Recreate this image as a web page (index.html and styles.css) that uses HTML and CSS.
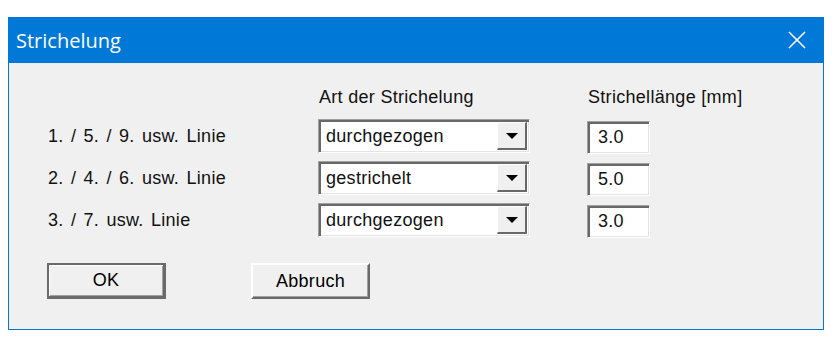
FILE: index.html
```html
<!DOCTYPE html>
<html lang="de">
<head>
  <meta charset="UTF-8" />
  <title>Strichelung</title>
  <link rel="stylesheet" href="styles.css">
</head>
<body>

  <div class="dialog">
    <div class="titlebar">
      <span class="title">Strichelung</span>
      <svg class="close" width="18" height="18" viewBox="0 0 18 18">
        <path d="M1 1 L17 17 M17 1 L1 17" stroke="#fff" stroke-width="1.6" fill="none" />
      </svg>
    </div>

    <div class="client">
      <div class="grid">
        <div></div>
        <div class="head">Art der Strichelung</div>
        <div class="head">Strichellänge [mm]</div>

        <div class="label">1. / 5. / 9. usw. Linie</div>
        <div class="combo"><span class="value">durchgezogen</span><span class="drop"><i class="arrow"></i></span></div>
        <div class="edit">3.0</div>

        <div class="label">2. / 4. / 6. usw. Linie</div>
        <div class="combo"><span class="value">gestrichelt</span><span class="drop"><i class="arrow"></i></span></div>
        <div class="edit">5.0</div>

        <div class="label">3. / 7. usw. Linie</div>
        <div class="combo"><span class="value">durchgezogen</span><span class="drop"><i class="arrow"></i></span></div>
        <div class="edit">3.0</div>
      </div>

      <div class="buttons">
        <div class="btn default">OK</div>
        <div class="btn">Abbruch</div>
      </div>
    </div>
  </div>

</body>
</html>
```

FILE: styles.css
```css
* {
  box-sizing: border-box;
  margin: 0;
  padding: 0;
}

body {
  background: #fff;
  font-family: 'Liberation Sans', Arial, sans-serif;
  font-size: 18px;
  color: #000;
}

.dialog {
  margin: 17px 0 0 8px;
  width: 816px;
}

/* Title bar */
.titlebar {
  height: 46px;
  background: #0078d7;
  display: flex;
  align-items: center;
  justify-content: space-between;
  padding: 0 18px 0 8px;
}

.title {
  font-family: 'Open Sans', 'Noto Sans', sans-serif;
  font-size: 20px;
  color: #fff;
}

.close {
  display: block;
}

/* Client area */
.client {
  height: 267px;
  background: #f0f0f0;
  border: 1px solid #0078d7;
  border-top: none;
  padding: 24px 0 0 39px;
}

.grid {
  display: grid;
  grid-template-columns: 270px 269px 160px;
  grid-template-rows: 24px repeat(3, 34px);
  row-gap: 8px;
  letter-spacing: 0.3px;
  color: #111;
}

.head {
  line-height: 20px;
  padding-left: 1px;
  white-space: nowrap;
}

.label {
  display: flex;
  align-items: center;
  word-spacing: 2px;
}

.combo {
  height: 34px;
  width: 212px;
  display: flex;
  background: #fff;
  border: 1px solid;
  border-color: #a0a0a0 #fff #fff #a0a0a0;
  box-shadow: inset 2px 2px #696969, inset -1px -1px #e3e3e3;
  padding: 2px;
}

.value {
  flex: 1;
  display: flex;
  align-items: center;
  padding-left: 5px;
}

.drop {
  width: 30px;
  background: #f0f0f0;
  border-top: 1px solid #fff;
  border-left: 1px solid #fff;
  border-right: 2px solid #696969;
  border-bottom: 2px solid #696969;
  display: flex;
  align-items: center;
  justify-content: center;
}

.arrow {
  width: 0;
  height: 0;
  border-left: 6px solid transparent;
  border-right: 6px solid transparent;
  border-top: 6px solid #000;
}

.edit {
  margin-top: 2px;
  height: 33px;
  width: 63px;
  background: #fff;
  border: 1px solid;
  border-color: #a0a0a0 #fff #fff #a0a0a0;
  box-shadow: inset 2px 2px #696969, inset -1px -1px #e3e3e3;
  padding-left: 10px;
  display: flex;
  align-items: center;
}

/* Buttons */
.buttons {
  display: flex;
  gap: 85px;
  margin-top: 26px;
  margin-left: -1px;
}

.btn {
  width: 119px;
  height: 36px;
  display: flex;
  align-items: center;
  justify-content: center;
  background: #f0f0f0;
  border: 2px solid;
  border-color: #fff #696969 #696969 #fff;
  box-shadow: inset -1px -1px #a0a0a0;
  letter-spacing: 0.3px;
}

.btn.default {
  border: 2px solid #6b6b6b;
  border-bottom-width: 3px;
  border-right-width: 3px;
  box-shadow: inset 1px 1px #fff, inset -1px -1px #a0a0a0;
}
```
